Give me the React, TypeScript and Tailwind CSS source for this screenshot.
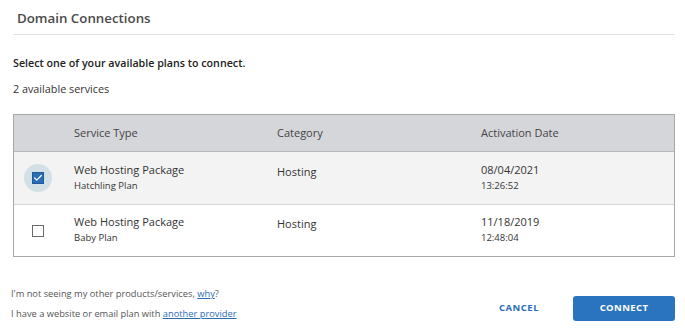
import { Check } from 'lucide-react';

type Service = {
  id: string;
  type: string;
  plan: string;
  category: string;
  date: string;
  time: string;
  selected: boolean;
};

const services: Service[] = [
  { id: '1', type: 'Web Hosting Package', plan: 'Hatchling Plan', category: 'Hosting', date: '08/04/2021', time: '13:26:52', selected: true },
  { id: '2', type: 'Web Hosting Package', plan: 'Baby Plan', category: 'Hosting', date: '11/18/2019', time: '12:48:04', selected: false },
];

export default function App() {
  return (
    <div
      className="w-[685px] h-[331px] bg-white text-[#333] overflow-hidden"
      style={{ fontFamily: '"Open Sans", "Noto Sans", sans-serif' }}
    >
      <div className="pl-[13px] pr-[10px]">
        {/* Header */}
        <div className="h-[35px] pt-[8px] pl-[4px] border-b border-[#e3e3e3]">
          <h2 className="text-[13.3px] leading-[20px] font-semibold text-[#4a4a4a]">
            Domain Connections
          </h2>
        </div>

        <p className="mt-[20px] text-[10.7px] leading-[16px] font-semibold text-[#222]">
          Select one of your available plans to connect.
        </p>
        <p className="mt-[10px] text-[10.8px] leading-[16px] text-[#333]">2 available services</p>

        {/* Table */}
        <div className="mt-[17px] border border-[#a8a8a8]">
          <div className="grid grid-cols-[60px_203px_204px_1fr] h-[37px] items-center bg-[#d5d6da] border-b border-[#b9b9bd] text-[11px] text-[#444]">
            <div />
            <div>Service Type</div>
            <div>Category</div>
            <div>Activation Date</div>
          </div>
          {services.map((s, i) => (
            <div
              key={s.id}
              className={
                'grid grid-cols-[60px_203px_204px_1fr] items-center ' +
                (s.selected ? 'bg-[#f3f3f3] ' : 'bg-white ') +
                (i < services.length - 1 ? 'h-[53px] border-b border-[#d8d8d8]' : 'h-[51px]')
              }
            >
              <div className="flex justify-center pr-[12px]">
                {s.selected ? (
                  <div className="w-[28px] h-[28px] rounded-full bg-[#d3e0e6] flex items-center justify-center">
                    <div className="w-[12px] h-[12px] bg-[#2a6cb6] border border-[#1f5a9c] flex items-center justify-center">
                      <Check className="w-[10px] h-[10px] text-white" strokeWidth={3} />
                    </div>
                  </div>
                ) : (
                  <div className="w-[12px] h-[12px] border border-[#6b6b6b] bg-white" />
                )}
              </div>
              <div className="-mt-[2px]">
                <div className="text-[11px] leading-[15px] text-[#333]">{s.type}</div>
                <div className="mt-[2px] text-[9.5px] leading-[14px] text-[#333]">{s.plan}</div>
              </div>
              <div className="-mt-[14px] text-[11px] leading-[15px] text-[#333]">{s.category}</div>
              <div className="-mt-[2px]">
                <div className="text-[11px] leading-[15px] text-[#333]">{s.date}</div>
                <div className="mt-[2px] text-[9.5px] leading-[14px] text-[#333]">{s.time}</div>
              </div>
            </div>
          ))}
        </div>

        {/* Footer */}
        <div className="mt-[30px] flex items-start justify-between">
          <div className="-ml-[2px] text-[9.3px] text-[#555] leading-[14px]">
            <p>
              I'm not seeing my other products/services,{' '}
              <a className="text-[#2a6cb6] underline">why</a>?
            </p>
            <p className="mt-[6px]">
              I have a website or email plan with{' '}
              <a className="text-[#2a6cb6] underline">another provider</a>
            </p>
          </div>
          <div className="flex items-center pt-[9px]">
            <button className="text-[9.5px] font-bold tracking-[0.5px] text-[#2a6cb6] mr-[34px]">
              CANCEL
            </button>
            <button className="w-[102px] h-[25px] rounded-[3px] bg-[#2a74bf] text-white text-[9.5px] font-bold tracking-[0.4px]">
              CONNECT
            </button>
          </div>
        </div>
      </div>
    </div>
  );
}
